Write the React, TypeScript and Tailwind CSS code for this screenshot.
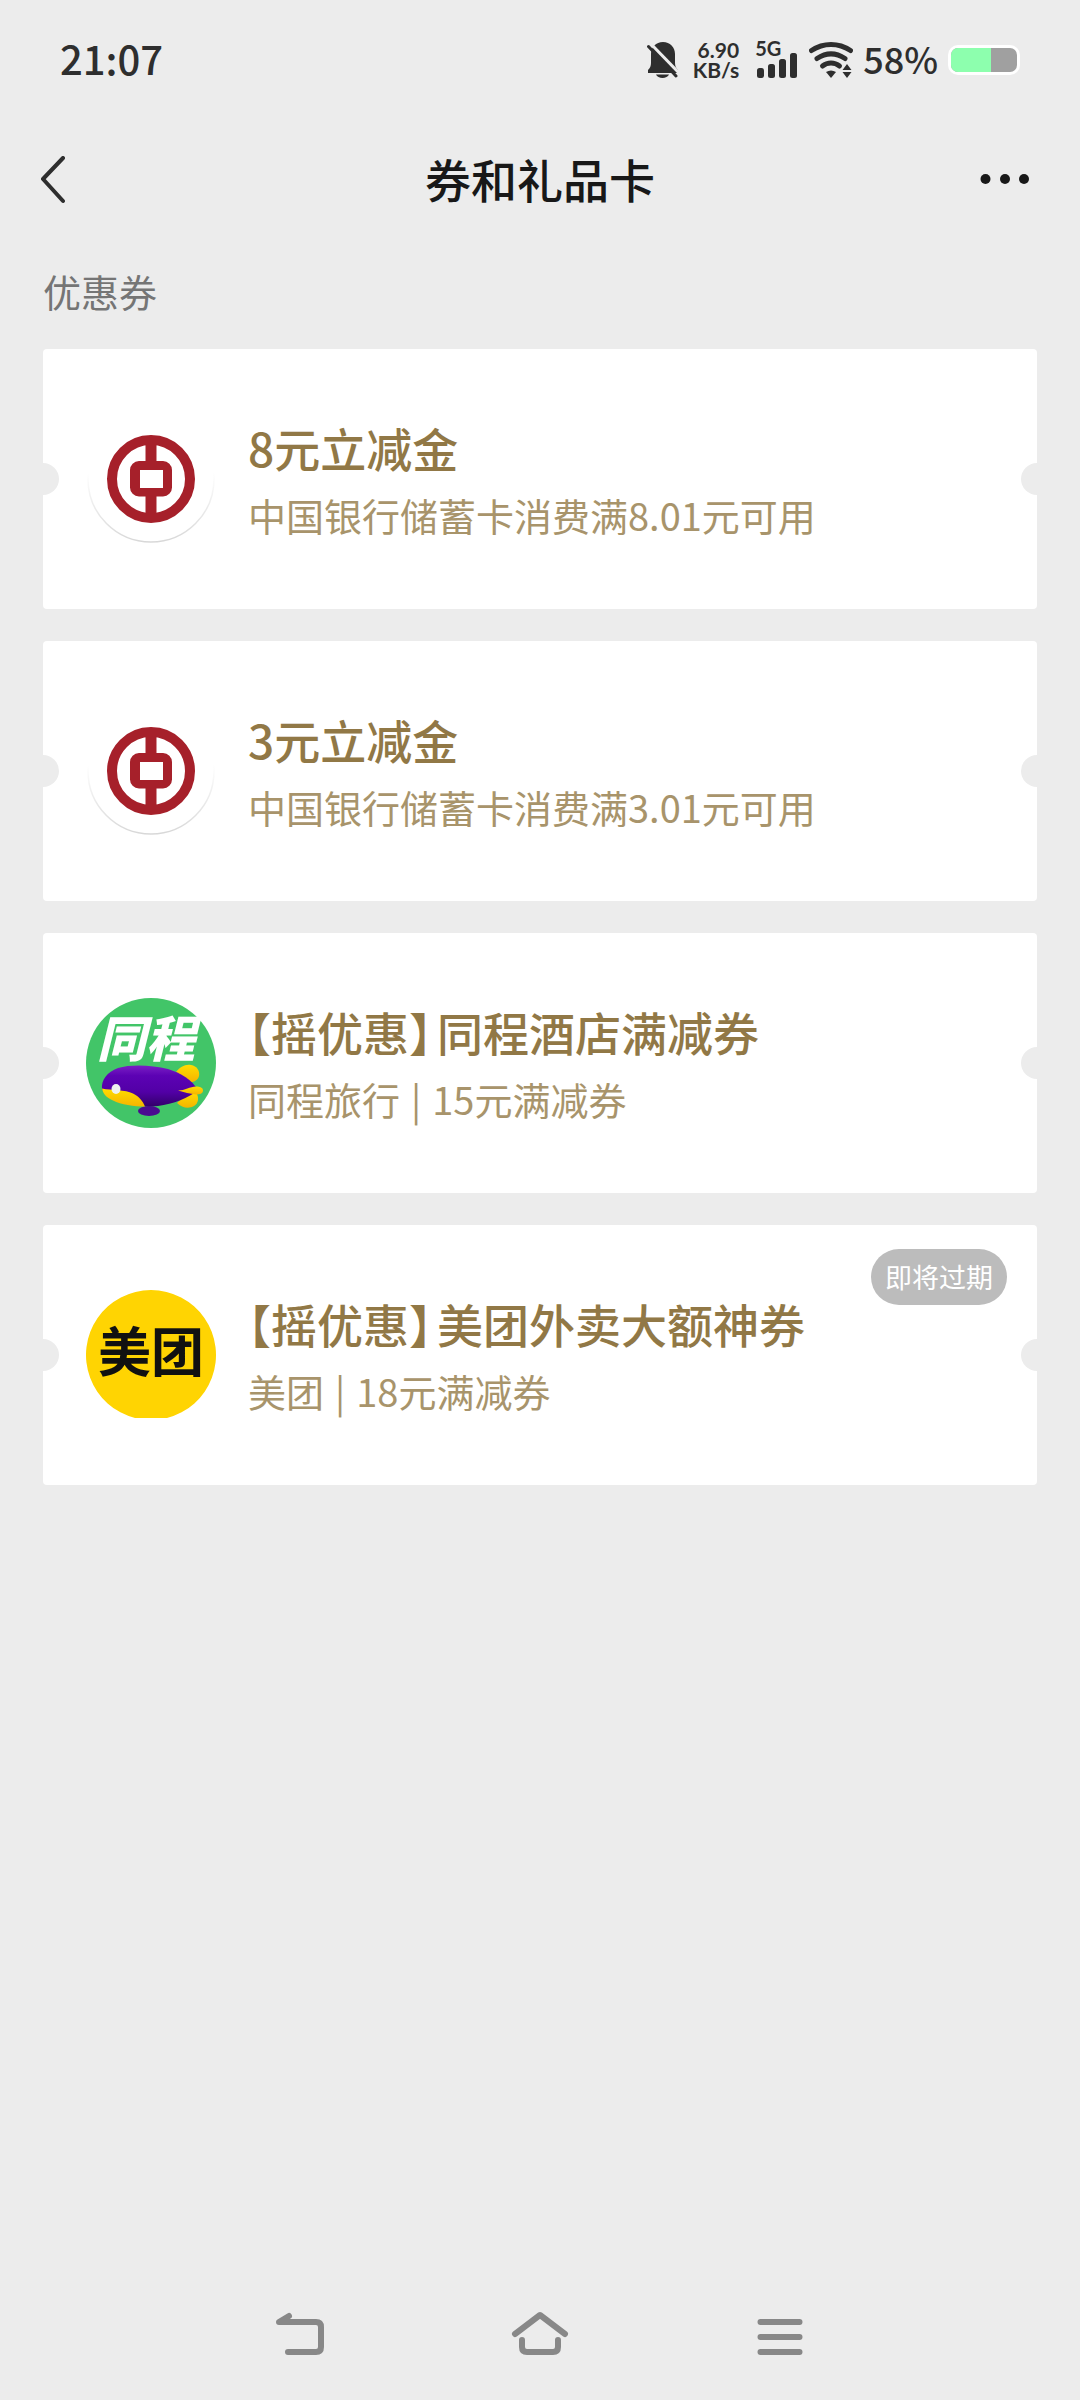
import React from 'react'

interface Coupon {
  id: string
  tag?: string
  title: string
  brand?: string
  detail: string
  expiring?: boolean
  logo: React.ReactNode
}

const BankLogo = () => (
  <svg viewBox="0 0 130 130" className="size-full" aria-hidden="true">
    <defs>
      <linearGradient id="rim" x1="0" y1="0" x2="0" y2="1">
        <stop offset="0.45" stopColor="#d8d8d8" stopOpacity="0" />
        <stop offset="1" stopColor="#d8d8d8" />
      </linearGradient>
    </defs>
    <circle cx="65" cy="65" r="63" fill="none" stroke="url(#rim)" strokeWidth="1.5" />
    <circle cx="65" cy="65" r="39" fill="none" stroke="#a6202a" strokeWidth="10" />
    <path d="M59.5 28h11v22h-11zM59.5 80h11v22h-11z" fill="#a6202a" />
    <path
      d="M53 47h24a9 9 0 0 1 9 9v17.500a9 9 0 0 1-9 9H53a9 9 0 0 1-9-9V56a9 9 0 0 1 9-9zM54 56v18h23V56z"
      fill="#a6202a"
      fillRule="evenodd"
    />
  </svg>
)

const TravelLogo = () => (
  <svg viewBox="0 0 130 130" className="size-full" aria-hidden="true">
    <defs>
      <linearGradient id="body" x1="0" y1="0" x2="0" y2="1">
        <stop offset="0" stopColor="#7a1fc4" />
        <stop offset="0.25" stopColor="#5c02b4" />
        <stop offset="0.65" stopColor="#5200a6" />
        <stop offset="1" stopColor="#33006b" />
      </linearGradient>
      <linearGradient id="fin" x1="0" y1="0" x2="0" y2="1">
        <stop offset="0" stopColor="#ffdc00" />
        <stop offset="1" stopColor="#f5b400" />
      </linearGradient>
    </defs>
    <circle cx="65" cy="65" r="65" fill="#42c568" />
    <text
      x="60"
      y="59"
      textAnchor="middle"
      fill="#fff"
      className="font-['Noto_Sans_CJK_SC',sans-serif] text-[49px] font-black italic"
    >
      同程
    </text>
    <path d="M90 74c4-5 9-8 15-7 6 1 9 6 8 11-1 4-5 6-8 6z" fill="url(#fin)" />
    <path d="M91 105c5 5 12 6 17 3 5-3 5-9 2-14l-8 1z" fill="url(#fin)" />
    <ellipse cx="63" cy="113" rx="11" ry="5" fill="#4a0a90" />
    <path d="M16 91c-1-9 5-17 16-21 13-4 34-3 50 1 13 4 24 11 30 21-9 8-25 14-40 16-20 1-48-2-56-17z" fill="url(#body)" />
    <path d="M16 90.500c10 2 23 1 31 5 6 3 10 8 12 13-11 0-24-2-32-6-7-3-10-7-11-12z" fill="url(#fin)" />
    <path d="M92 92.500c7 0 12-4 18-4 4 0 7 1 7 4s-3 4-7 4c-6-1-12-2-18-4z" fill="url(#fin)" />
    <ellipse cx="30" cy="91" rx="4.500" ry="5" fill="#eef2f0" />
  </svg>
)

const MeituanLogo = () => (
  <svg viewBox="0 0 130 130" className="size-full" aria-hidden="true">
    <path d="M49 128a65 65 0 1 1 32 0z" fill="#ffd402" />
    <text
      x="65"
      y="82"
      textAnchor="middle"
      fill="#111"
      className="font-['Noto_Sans_CJK_SC',sans-serif] text-[53px] font-bold"
    >
      美团
    </text>
  </svg>
)

const COUPONS: Coupon[] = [
  { id: 'boc-8', title: '8元立减金', detail: '中国银行储蓄卡消费满8.01元可用', logo: <BankLogo /> },
  { id: 'boc-3', title: '3元立减金', detail: '中国银行储蓄卡消费满3.01元可用', logo: <BankLogo /> },
  { id: 'ly-15', tag: '【摇优惠】', title: '同程酒店满减券', brand: '同程旅行', detail: '15元满减券', logo: <TravelLogo /> },
  { id: 'mt-18', tag: '【摇优惠】', title: '美团外卖大额神券', brand: '美团', detail: '18元满减券', expiring: true, logo: <MeituanLogo /> }
]

const BellOffIcon = () => (
  <svg viewBox="0 0 32 36" className="h-9 w-8" fill="#2e2e2e" aria-hidden="true">
    <path d="M16 0c7 0 12 5 12 12v9c0 3 1 5 3 7v3H1v-3c2-2 3-4 3-7v-9C4 5 9 0 16 0z" />
    <path d="M9 32.500h13c-1 2-3.500 3.500-6.500 3.500S10 34.500 9 32.500z" />
    <path d="M4 2L33 32" stroke="#ececec" strokeWidth="3" />
    <path d="M1.500 4.500L29 34" stroke="#2e2e2e" strokeWidth="3" strokeLinecap="round" />
  </svg>
)

const SignalIcon = () => (
  <div className="relative mx-0.5 flex h-9 w-[42px] items-end">
    <span className="absolute -top-0.5 left-0 font-[Lato,sans-serif] text-xl leading-4 font-bold">5G</span>
    <svg viewBox="0 0 42 26" className="h-[26px] w-[42px]" fill="#2e2e2e" aria-hidden="true">
      <rect x="2" y="16" width="7" height="10" rx="2.500" />
      <rect x="13" y="12" width="7" height="14" rx="2.500" />
      <rect x="24" y="7" width="7" height="19" rx="2.500" />
      <rect x="35" y="1" width="7" height="25" rx="2.500" />
    </svg>
  </div>
)

const WifiIcon = () => (
  <svg viewBox="0 0 44 36" className="h-9 w-11" fill="none" aria-hidden="true">
    <g stroke="#2e2e2e" strokeWidth="5" strokeLinecap="round">
      <path d="M2.500 8.500c12-8 27-8 39 0" />
      <path d="M8 16.500c9-6 19-6 28 0" />
      <path d="M13.500 24c5-4 12-4 17 0" />
    </g>
    <path d="M17 30q5-3 10 0l-5 6z" fill="#2e2e2e" />
    <path d="M38 22l4.500 6h-9zM38 36l4.500-6h-9z" fill="#2e2e2e" />
  </svg>
)

const StatusBar = () => (
  <div className="flex h-[120px] items-center justify-between px-15 text-[#2e2e2e]">
    <time className="pb-1 text-[40px] leading-none font-medium">21:07</time>
    <div className="flex items-center gap-2.5">
      <BellOffIcon />
      <p className="mx-1 text-right font-[Lato,sans-serif] text-[21px] leading-5 font-bold">
        6.90
        <br />
        KB/s
      </p>
      <SignalIcon />
      <WifiIcon />
      <span className="pb-1 text-[36px] leading-none font-medium">58%</span>
      <div className="h-[30px] w-[72px] rounded-[10px] bg-white p-[3px]">
        <div className="h-full overflow-hidden rounded-[7px] bg-[#a0a0a0]">
          <div className="h-full w-[60%] bg-[#8dffae]" />
        </div>
      </div>
    </div>
  </div>
)

const Header = () => (
  <header className="grid h-[120px] grid-cols-[1fr_auto_1fr] items-center px-10 text-[#181818]">
    <button type="button" aria-label="返回" className="justify-self-start">
      <svg viewBox="0 0 26 48" className="h-12 w-[26px]" fill="none" stroke="#2e2e2e" strokeWidth="4" strokeLinecap="round" strokeLinejoin="round">
        <path d="M23 2L3 23l20 22" />
      </svg>
    </button>
    <h1 className="pb-1 text-[46px] leading-[64px] font-medium">券和礼品卡</h1>
    <button type="button" aria-label="更多" className="justify-self-end">
      <svg viewBox="0 0 60 48" className="h-12 w-15" fill="#181818">
        <circle cx="5.500" cy="23" r="5" />
        <circle cx="25" cy="23" r="5" />
        <circle cx="44" cy="23" r="5" />
      </svg>
    </button>
  </header>
)

const CouponCard: React.FC<{ coupon: Coupon }> = ({ coupon }) => (
  <a
    href={`#${coupon.id}`}
    className="relative flex h-[260px] items-center gap-8 overflow-hidden rounded-[4px] bg-white px-[43px]"
  >
    <span className="absolute top-1/2 -left-4 size-8 -translate-y-1/2 rounded-full bg-[#ececec]" />
    <span className="absolute top-1/2 -right-4 size-8 -translate-y-1/2 rounded-full bg-[#ececec]" />
    <div className="size-[130px] shrink-0">{coupon.logo}</div>
    <div className="min-w-0">
      <h3 className="flex gap-[5px] text-[46px] leading-[72px] font-medium text-[#917846]">
        {coupon.tag && <span className="[font-feature-settings:'halt']">{coupon.tag}</span>}
        <span>{coupon.title}</span>
      </h3>
      <p className="flex gap-[11px] text-[38px] leading-[64px] text-[#a8946b]">
        {coupon.brand && (
          <>
            <span>{coupon.brand}</span>
            <span>|</span>
          </>
        )}
        <span>{coupon.detail}</span>
      </p>
    </div>
    {coupon.expiring && (
      <span className="absolute top-6 right-[30px] rounded-full bg-[#bcbcbc] px-3.5 text-[27px] leading-[56px] text-white">
        即将过期
      </span>
    )}
  </a>
)

const SystemNav = () => (
  <nav className="mt-auto flex justify-center gap-[180px] pt-10 pb-[42px]" aria-label="系统导航">
    <button type="button" aria-label="后退">
      <svg viewBox="0 0 60 48" className="h-12 w-15" fill="none" stroke="#888" strokeWidth="6" strokeLinecap="round" strokeLinejoin="round">
        <path d="M18 42h28q5 0 5-5V17q0-5-5-5H9l10-6" />
      </svg>
    </button>
    <button type="button" aria-label="主屏幕">
      <svg viewBox="0 0 60 48" className="h-12 w-15" fill="none" stroke="#888" strokeWidth="6" strokeLinecap="round" strokeLinejoin="round">
        <path d="M5 24L30 5l25 19" />
        <path d="M12 30v7q0 5 5 5h26q5 0 5-5v-7" />
      </svg>
    </button>
    <button type="button" aria-label="最近任务">
      <svg viewBox="0 0 60 48" className="h-12 w-15" fill="none" stroke="#888" strokeWidth="6" strokeLinecap="round">
        <path d="M10.500 12h39M10.500 27h39M10.500 42h39" />
      </svg>
    </button>
  </nav>
)

export default function App() {
  return (
    <div className="flex min-h-screen flex-col bg-[#ececec] font-['Noto_Sans_CJK_SC',sans-serif]">
      <StatusBar />
      <Header />
      <main className="px-[43px] pt-6">
        <h2 className="text-[38px] leading-[54px] text-[#757575]">优惠券</h2>
        <ul className="mt-[31px] flex flex-col gap-8">
          {COUPONS.map((coupon) => (
            <li key={coupon.id}>
              <CouponCard coupon={coupon} />
            </li>
          ))}
        </ul>
      </main>
      <SystemNav />
    </div>
  )
}
